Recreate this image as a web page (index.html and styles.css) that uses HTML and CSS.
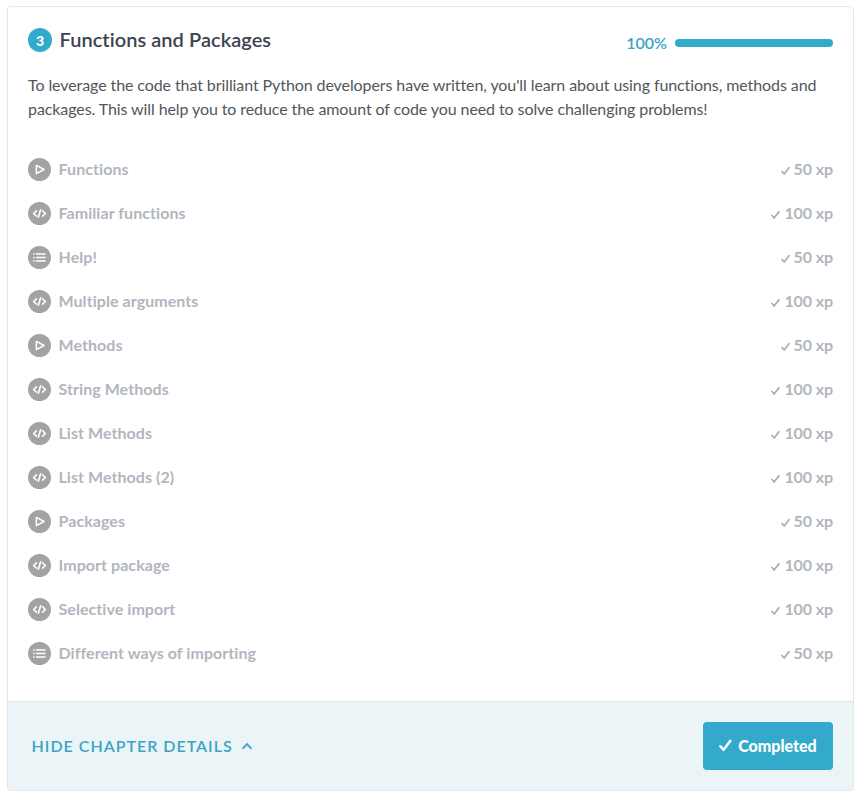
FILE: index.html
```
<!DOCTYPE html>
<html lang="en">
<head>
<meta charset="utf-8">
<title>Functions and Packages</title>
<link rel="stylesheet" href="styles.css">
</head>
<body>
<svg class="sprite" aria-hidden="true">
  <symbol id="video" viewBox="0 0 23 23"><circle cx="11.5" cy="11.5" r="11.5" fill="#a3a3a3"/><path d="M8.4 7.3v8.4l7.6-4.2z" fill="none" stroke="#fff" stroke-width="1.5" stroke-linejoin="round"/></symbol>
  <symbol id="code" viewBox="0 0 23 23"><circle cx="11.5" cy="11.5" r="11.5" fill="#a3a3a3"/><path d="M8.4 8.9 5.6 11.5l2.8 2.6M14.6 8.9l2.8 2.6-2.8 2.6M12.6 7.7l-2.2 7.6" fill="none" stroke="#fff" stroke-width="1.6" stroke-linecap="round" stroke-linejoin="round"/></symbol>
  <symbol id="list" viewBox="0 0 23 23"><circle cx="11.5" cy="11.5" r="11.5" fill="#a3a3a3"/><path d="M5.2 8h1.5M5.2 11.5h1.5M5.2 15h1.5M8 8h9.6M8 11.5h9.6M8 15h9.6" fill="none" stroke="#fff" stroke-width="1.6"/></symbol>
  <symbol id="check" viewBox="0 0 12 12"><path d="M1.3 6.7 4.3 10 10.5 1.7" fill="none" stroke="currentColor" stroke-width="2.3" stroke-linecap="round" stroke-linejoin="round"/></symbol>
</svg>
<article class="chapter">
  <div class="content">
    <header class="head">
      <span class="number">3</span>
      <h1 class="title">Functions and Packages</h1>
      <span class="percent">100%</span>
      <span class="bar"></span>
    </header>
    <p class="description">To leverage the code that brilliant Python developers have written, you'll learn about using functions, methods and packages. This will help you to reduce the amount of code you need to solve challenging problems!</p>
    <ul class="exercises">
      <li class="row"><svg class="kind"><use href="#video"/></svg><span class="name">Functions</span><svg class="tick"><use href="#check"/></svg><span class="xp">50 xp</span></li>
      <li class="row"><svg class="kind"><use href="#code"/></svg><span class="name">Familiar functions</span><svg class="tick"><use href="#check"/></svg><span class="xp">100 xp</span></li>
      <li class="row"><svg class="kind"><use href="#list"/></svg><span class="name">Help!</span><svg class="tick"><use href="#check"/></svg><span class="xp">50 xp</span></li>
      <li class="row"><svg class="kind"><use href="#code"/></svg><span class="name">Multiple arguments</span><svg class="tick"><use href="#check"/></svg><span class="xp">100 xp</span></li>
      <li class="row"><svg class="kind"><use href="#video"/></svg><span class="name">Methods</span><svg class="tick"><use href="#check"/></svg><span class="xp">50 xp</span></li>
      <li class="row"><svg class="kind"><use href="#code"/></svg><span class="name">String Methods</span><svg class="tick"><use href="#check"/></svg><span class="xp">100 xp</span></li>
      <li class="row"><svg class="kind"><use href="#code"/></svg><span class="name">List Methods</span><svg class="tick"><use href="#check"/></svg><span class="xp">100 xp</span></li>
      <li class="row"><svg class="kind"><use href="#code"/></svg><span class="name">List Methods (2)</span><svg class="tick"><use href="#check"/></svg><span class="xp">100 xp</span></li>
      <li class="row"><svg class="kind"><use href="#video"/></svg><span class="name">Packages</span><svg class="tick"><use href="#check"/></svg><span class="xp">50 xp</span></li>
      <li class="row"><svg class="kind"><use href="#code"/></svg><span class="name">Import package</span><svg class="tick"><use href="#check"/></svg><span class="xp">100 xp</span></li>
      <li class="row"><svg class="kind"><use href="#code"/></svg><span class="name">Selective import</span><svg class="tick"><use href="#check"/></svg><span class="xp">100 xp</span></li>
      <li class="row"><svg class="kind"><use href="#list"/></svg><span class="name">Different ways of importing</span><svg class="tick"><use href="#check"/></svg><span class="xp">50 xp</span></li>
    </ul>
  </div>
  <footer class="foot">
    <a class="toggle"><span>HIDE CHAPTER DETAILS</span><svg class="caret" viewBox="0 0 10 8"><path d="M1.2 6.2 5 2.2l3.8 4" fill="none" stroke="currentColor" stroke-width="1.9" stroke-linecap="round"/></svg></a>
    <button class="done"><svg class="done-tick"><use href="#check"/></svg><span>Completed</span></button>
  </footer>
</article>
</body>
</html>
```
FILE: styles.css
```
* { box-sizing: border-box; }
body { margin: 0; padding: 6px 6px 9px 7px; background: #fff; font-family: Lato, sans-serif; font-variant-ligatures: none; }
.sprite { display: none; }
.chapter { display: flex; flex-direction: column; height: 785px; border: 1px solid #e4e8ea; border-radius: 4px; overflow: hidden; }
.content { flex: 1; padding: 20px 20px 0; }
.head { display: flex; align-items: center; height: 26px; }
.number { display: flex; align-items: center; justify-content: center; width: 24px; height: 24px; border-radius: 50%; background: #33aacc; color: #fff; font-size: 14px; font-weight: 900; }
.title { flex: 1; margin: -2px 0 0 7.5px; color: #3d4251; font-size: 20px; line-height: 26px; font-weight: 600; letter-spacing: 0.05px; }
.percent { margin: 6px 8px 0 0; color: #3ba4c4; font-size: 16px; line-height: 20px; font-weight: 600; }
.bar { width: 158px; height: 8px; margin-top: 6px; border-radius: 4px; background: #33aacc; }
.description { margin: 20px 0 0; color: #525759; font-size: 16px; line-height: 24px; letter-spacing: -0.09px; }
.exercises { list-style: none; margin: 26px 0 0; padding: 0; }
.row { display: flex; align-items: center; height: 44px; color: #b1b6be; font-size: 16px; font-weight: 700; }
.kind { width: 23px; height: 23px; margin-right: 7.5px; }
.name { flex: 1; padding-bottom: 2px; letter-spacing: 0.06px; }
.xp { padding-bottom: 2px; letter-spacing: -0.1px; }
.tick { width: 9px; height: 10px; margin: 3px 4px 0 0; color: #a7acb2; }
.foot { display: flex; align-items: center; justify-content: space-between; height: 89px; padding: 0 20px 1px 23.5px; border-top: 1px solid #dfe9eb; background: #ebf4f7; }
.toggle { display: flex; align-items: center; gap: 9px; color: #3ba4c4; font-size: 16px; font-weight: 600; letter-spacing: 1px; }
.caret { width: 10px; height: 8px; }
.done { display: flex; align-items: center; justify-content: center; gap: 6px; width: 130px; height: 48px; padding: 0; border: 0; border-radius: 4px; background: #33aacc; color: #fff; font: 900 16px Lato, sans-serif; }
.done-tick { width: 13px; height: 13px; }
```
